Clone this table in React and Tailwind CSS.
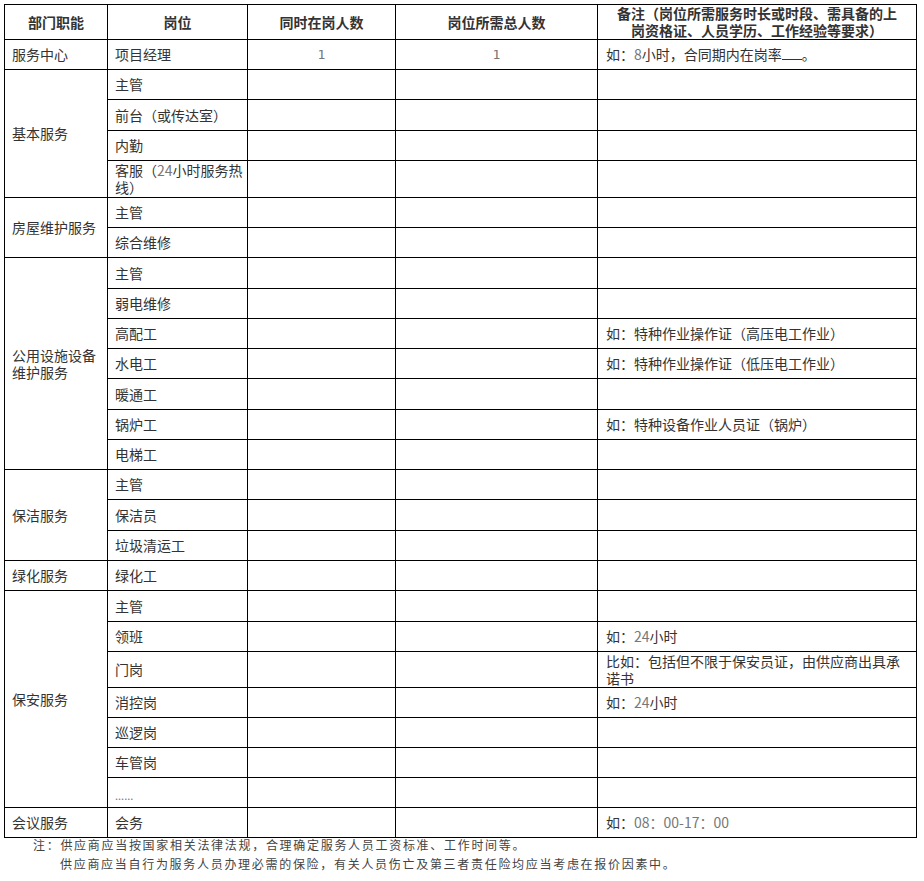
import React from "react";

const G = ({ children }) => <span className="text-[#777]">{children}</span>;

const groups = [
  { dept: "服务中心", items: [{ pos: "项目经理", a: "1", b: "1", note: <>如：<G>8</G>小时，合同期内在岗率<span className="inline-block w-[20px] border-b border-[#333] align-baseline"></span>。</> }] },
  {
    dept: "基本服务",
    items: [
      { pos: "主管" },
      { pos: "前台（或传达室）", h: "h-[31px]" },
      { pos: "内勤" },
      { pos: <>客服（<G>24</G>小时服务热<br />线）</>, h: "h-[37px]" },
    ],
  },
  { dept: "房屋维护服务", items: [{ pos: "主管" }, { pos: "综合维修" }] },
  {
    dept: <>公用设施设备<br />维护服务</>,
    items: [
      { pos: "主管", h: "h-[31px]" },
      { pos: "弱电维修" },
      { pos: "高配工", note: "如：特种作业操作证（高压电工作业）" },
      { pos: "水电工", note: "如：特种作业操作证（低压电工作业）" },
      { pos: "暖通工", h: "h-[31px]" },
      { pos: "锅炉工", note: "如：特种设备作业人员证（锅炉）" },
      { pos: "电梯工" },
    ],
  },
  { dept: "保洁服务", items: [{ pos: "主管" }, { pos: "保洁员", h: "h-[31px]" }, { pos: "垃圾清运工" }] },
  { dept: "绿化服务", items: [{ pos: "绿化工" }] },
  {
    dept: "保安服务",
    items: [
      { pos: "主管", h: "h-[31px]" },
      { pos: "领班", note: <>如：<G>24</G>小时</> },
      { pos: "门岗", h: "h-[36px]", note: <>比如：包括但不限于保安员证，由供应商出具承<br />诺书</> },
      { pos: "消控岗", note: <>如：<G>24</G>小时</> },
      { pos: "巡逻岗" },
      { pos: "车管岗" },
      { pos: <span className="text-[11px] text-[#777] relative top-[2px]">......</span> },
    ],
  },
  { dept: "会议服务", items: [{ pos: "会务", note: <>如：<G>08：00-17：00</G></> }] },
];

const td = "border border-black px-[7px] align-middle";

export default function App() {
  return (
    <div className="bg-white w-[924px] h-[881px] pl-[4px] pt-[4px] text-[#333]" style={{ fontFamily: '"Noto Sans CJK SC", "Noto Sans", sans-serif' }}>
      <table className="table-fixed border-collapse w-[912px] text-[14px] leading-[17px]">
        <colgroup>
          <col className="w-[103px]" />
          <col className="w-[140px]" />
          <col className="w-[148px]" />
          <col className="w-[202px]" />
          <col className="w-[319px]" />
        </colgroup>
        <thead>
          <tr className="h-[33px] font-bold text-center">
            <td className={td}>部门职能</td>
            <td className={td}>岗位</td>
            <td className={td}>同时在岗人数</td>
            <td className={td}>岗位所需总人数</td>
            <td className={`${td} leading-[17px] whitespace-nowrap`}>备注（岗位所需服务时长或时段、需具备的上<br />岗资格证、人员学历、工作经验等要求）</td>
          </tr>
        </thead>
        <tbody>
          {groups.map((g, gi) =>
            g.items.map((it, ii) => (
              <tr key={`${gi}-${ii}`} className={it.h || "h-[30px]"}>
                {ii === 0 && (
                  <td rowSpan={g.items.length} className={`${td} px-[6px] whitespace-nowrap`}>
                    {g.dept}
                  </td>
                )}
                <td className={`${td} whitespace-nowrap`}>{it.pos}</td>
                <td className={`${td} text-center text-[13px] text-[#777]`} style={{ fontFamily: '"DejaVu Sans Mono", monospace' }}>{it.a || ""}</td>
                <td className={`${td} text-center text-[13px] text-[#777]`} style={{ fontFamily: '"DejaVu Sans Mono", monospace' }}>{it.b || ""}</td>
                <td className={`${td} px-[8px] whitespace-nowrap`}>{it.note || ""}</td>
              </tr>
            ))
          )}
        </tbody>
      </table>
      <div className="-mt-[3px] text-[12px] leading-[19px] tracking-[1.7px] text-[#444]">
        <div className="pl-[29px]">注：供应商应当按国家相关法律法规，合理确定服务人员工资标准、工作时间等。</div>
        <div className="pl-[56px]">供应商应当自行为服务人员办理必需的保险，有关人员伤亡及第三者责任险均应当考虑在报价因素中。</div>
      </div>
    </div>
  );
}
